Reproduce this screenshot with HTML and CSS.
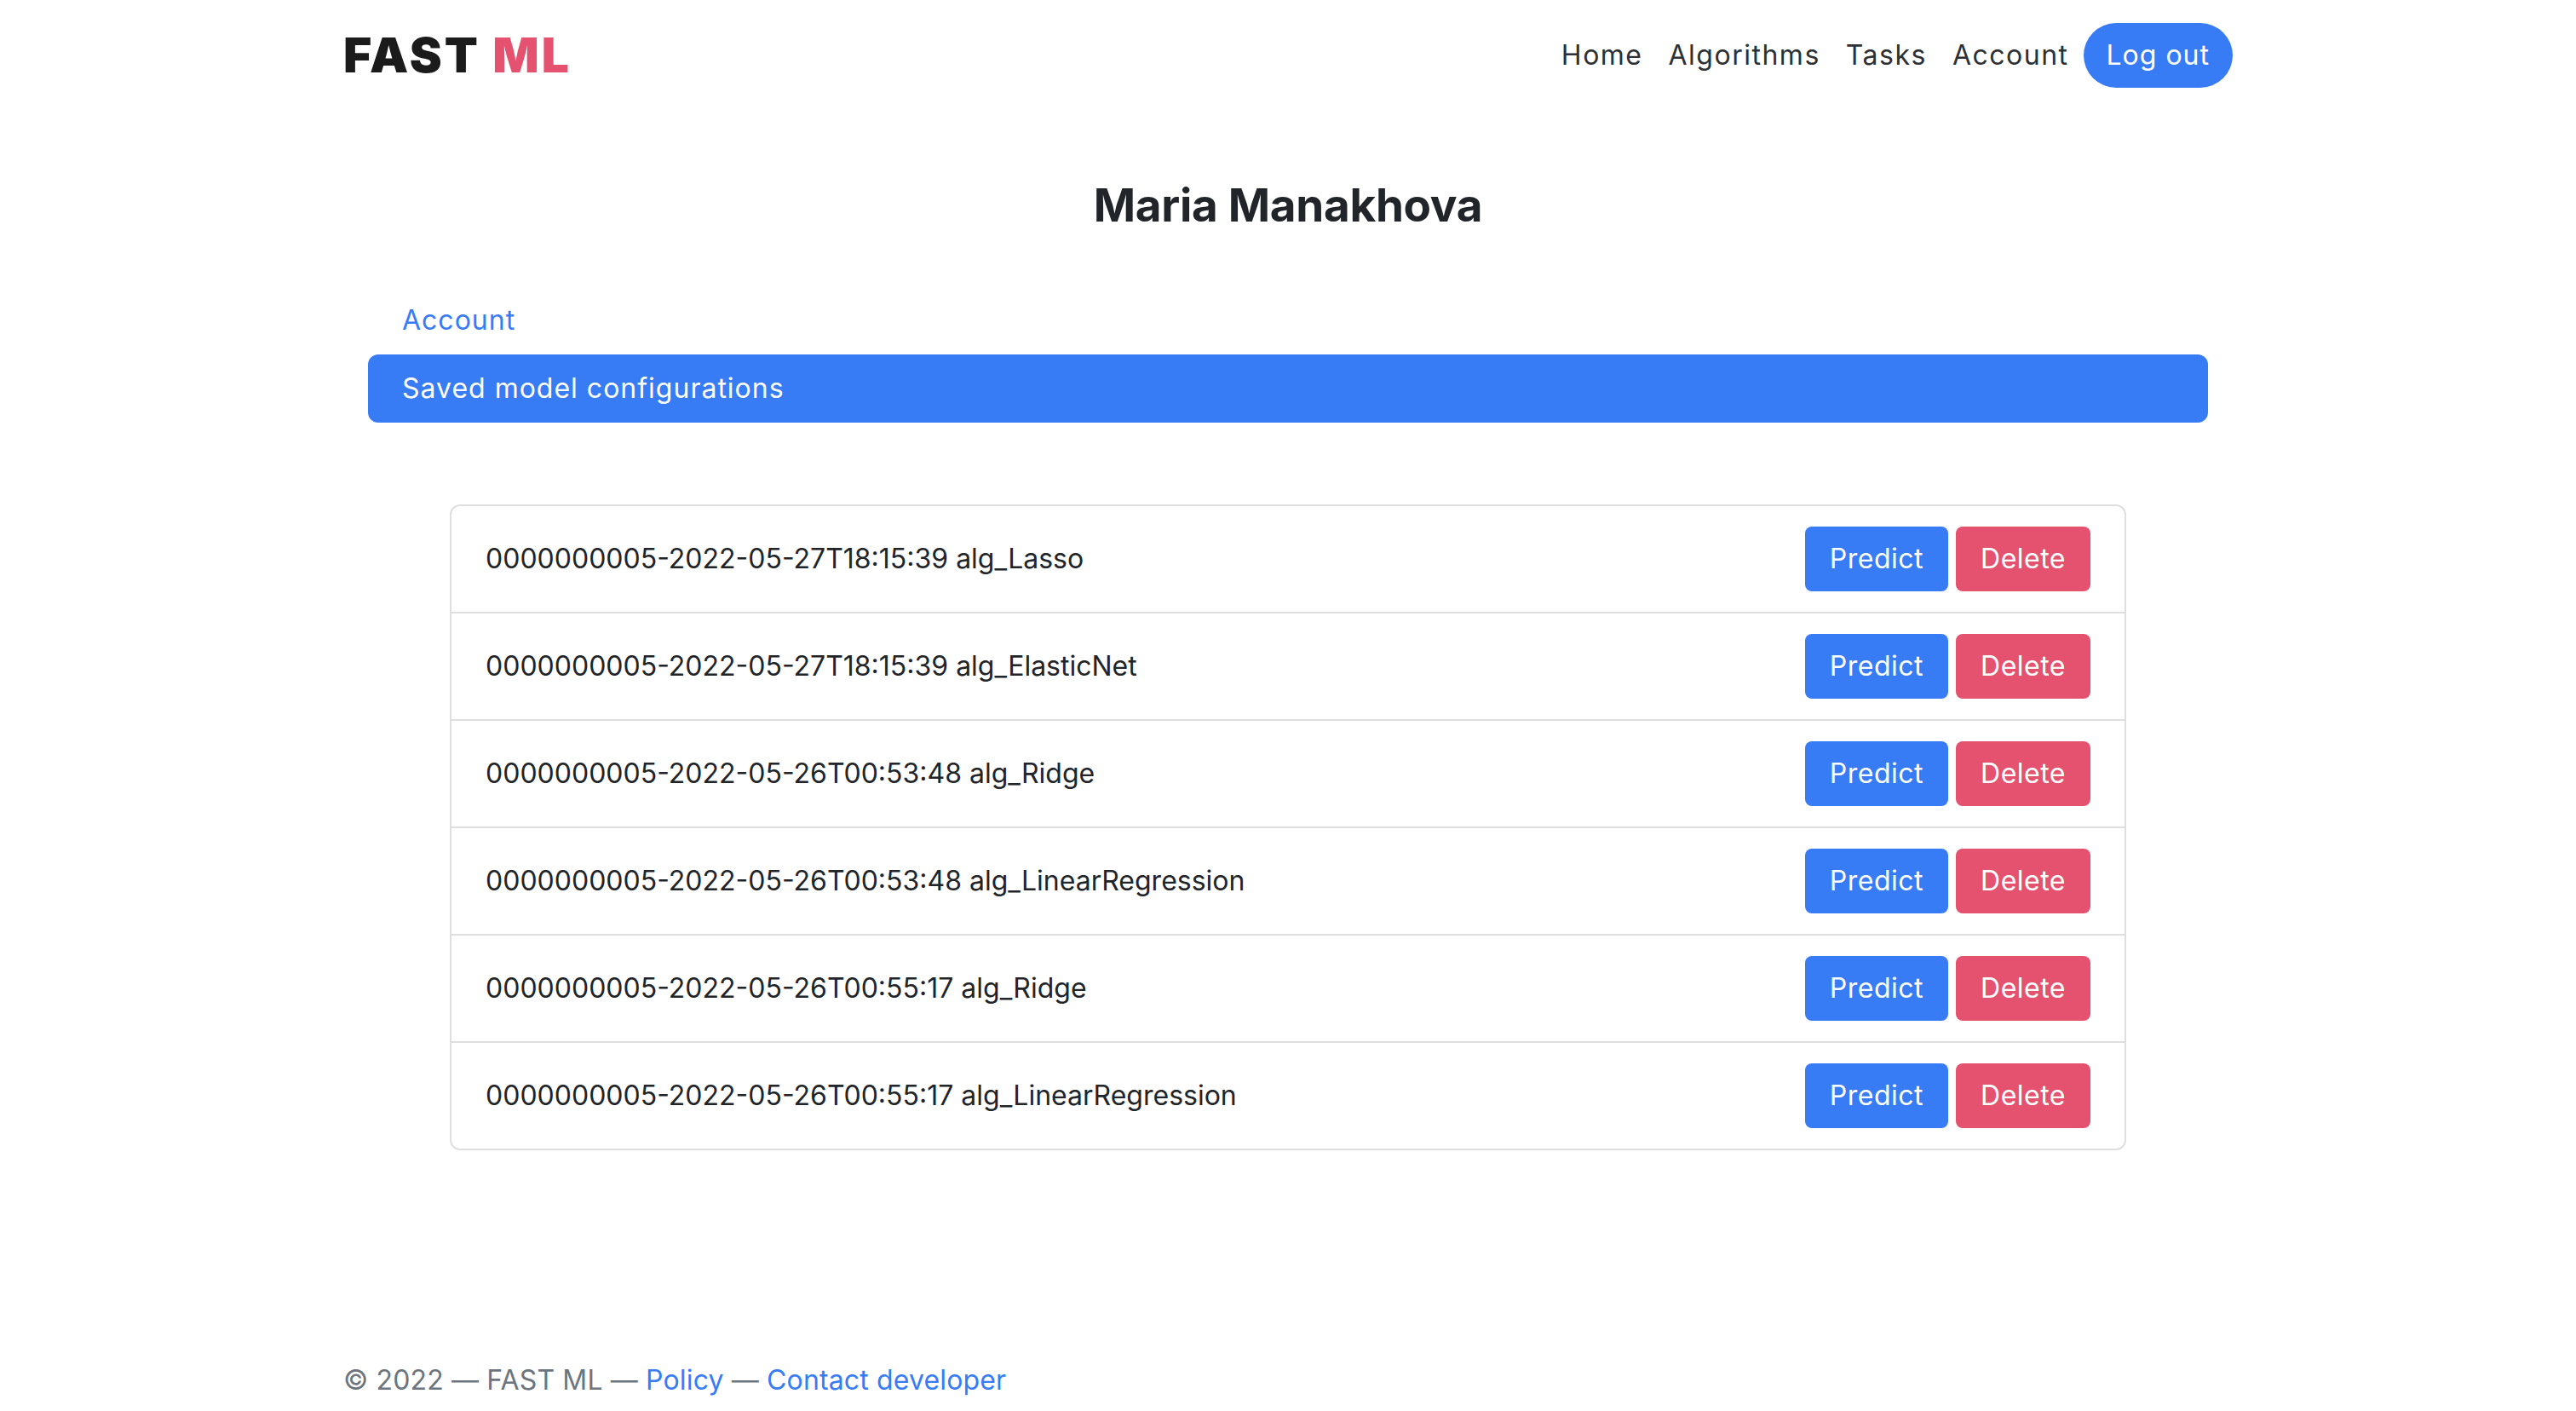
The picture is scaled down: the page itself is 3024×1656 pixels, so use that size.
FILE: index.html
```html
<!DOCTYPE html>
<html lang="en">
<head>
<meta charset="utf-8">
<title>FAST ML — Account</title>
<link rel="stylesheet" href="styles.css">
</head>
<body>
  <header class="site-header">
    <a class="brand" href="#">FAST <span class="brand-accent">ML</span></a>
    <nav class="main-nav">
      <a class="nav-link" href="#">Home</a>
      <a class="nav-link" href="#">Algorithms</a>
      <a class="nav-link" href="#">Tasks</a>
      <a class="nav-link" href="#">Account</a>
      <a class="btn-pill" href="#">Log out</a>
    </nav>
  </header>

  <main class="content">
    <h1 class="profile-name">Maria Manakhova</h1>

    <div class="tabs">
      <a class="tab" href="#">Account</a>
      <a class="tab tab-active" href="#">Saved model configurations</a>
    </div>

    <ul class="config-list">
      <li class="config-item">
        <span class="config-name">0000000005-2022-05-27T18:15:39 alg_Lasso</span>
        <span class="config-actions"><a class="btn btn-primary" href="#">Predict</a><a class="btn btn-danger" href="#">Delete</a></span>
      </li>
      <li class="config-item">
        <span class="config-name">0000000005-2022-05-27T18:15:39 alg_ElasticNet</span>
        <span class="config-actions"><a class="btn btn-primary" href="#">Predict</a><a class="btn btn-danger" href="#">Delete</a></span>
      </li>
      <li class="config-item">
        <span class="config-name">0000000005-2022-05-26T00:53:48 alg_Ridge</span>
        <span class="config-actions"><a class="btn btn-primary" href="#">Predict</a><a class="btn btn-danger" href="#">Delete</a></span>
      </li>
      <li class="config-item">
        <span class="config-name">0000000005-2022-05-26T00:53:48 alg_LinearRegression</span>
        <span class="config-actions"><a class="btn btn-primary" href="#">Predict</a><a class="btn btn-danger" href="#">Delete</a></span>
      </li>
      <li class="config-item">
        <span class="config-name">0000000005-2022-05-26T00:55:17 alg_Ridge</span>
        <span class="config-actions"><a class="btn btn-primary" href="#">Predict</a><a class="btn btn-danger" href="#">Delete</a></span>
      </li>
      <li class="config-item">
        <span class="config-name">0000000005-2022-05-26T00:55:17 alg_LinearRegression</span>
        <span class="config-actions"><a class="btn btn-primary" href="#">Predict</a><a class="btn btn-danger" href="#">Delete</a></span>
      </li>
    </ul>
  </main>

  <footer class="site-footer">
    <span>© 2022 — FAST ML — </span><a class="footer-link" href="#">Policy</a><span> — </span><a class="footer-link" href="#">Contact developer</a>
  </footer>
</body>
</html>
```

FILE: styles.css
```css
* { box-sizing: border-box; }

html, body {
  margin: 0;
  padding: 0;
}

body {
  min-height: 100vh;
  display: flex;
  flex-direction: column;
  background: #ffffff;
  color: #212529;
  font-family: "Inter", "Open Sans", sans-serif;
  font-size: 32px;
  line-height: 48px;
}

a { text-decoration: none; }

.site-header {
  width: 2218px;
  margin: 0 auto;
  padding: 27px 0 25px;
  display: flex;
  align-items: center;
  justify-content: space-between;
}

.brand {
  font-family: "Inter", sans-serif;
  font-weight: 900;
  font-size: 57px;
  line-height: 76px;
  color: #1b1b1b;
  letter-spacing: 3px;
}

.brand-accent { color: #e5526f; }

.main-nav {
  display: flex;
  align-items: center;
}

.nav-link {
  color: #2d3135;
  padding: 14px 15px;
  letter-spacing: 1.5px;
}

.btn-pill {
  background: #387cf5;
  color: #ffffff;
  border-radius: 40px;
  padding: 14px 27px;
  margin-left: 2px;
  line-height: 48px;
  letter-spacing: 1px;
}

.content {
  display: flex;
  flex-direction: column;
  align-items: center;
}

.profile-name {
  margin: 80px 0 61px;
  font-size: 53px;
  line-height: 67px;
  font-weight: 700;
  letter-spacing: -0.3px;
  color: #212529;
}

.tabs {
  width: 2160px;
  display: flex;
  flex-direction: column;
}

.tab {
  padding: 16px 40px;
  color: #387cf5;
  border-radius: 12px;
  letter-spacing: 1px;
}

.tab-active {
  background: #387cf5;
  color: #ffffff;
}

.config-list {
  list-style: none;
  margin: 96px 0 0;
  padding: 0;
  width: 1968px;
  border: 2px solid #dfdfdf;
  border-radius: 12px;
}

.config-item {
  display: flex;
  align-items: center;
  justify-content: space-between;
  padding: 24px 40px 24px 40px;
  border-top: 2px solid #dfdfdf;
}

.config-item:first-child { border-top: none; }

.config-name { color: #212529; }

.config-actions {
  display: flex;
  gap: 9px;
}

.btn {
  display: inline-block;
  padding: 14px 29px;
  border-radius: 8px;
  color: #ffffff;
  line-height: 48px;
  letter-spacing: 0.5px;
}

.btn-primary { background: #387cf5; }
.btn-danger { background: #e5526f; }

.site-footer {
  width: 2218px;
  margin: auto auto 0;
  padding: 0 0 12px;
  color: #6c757d;
  letter-spacing: 0.15px;
}

.footer-link { color: #387cf5; }
```
